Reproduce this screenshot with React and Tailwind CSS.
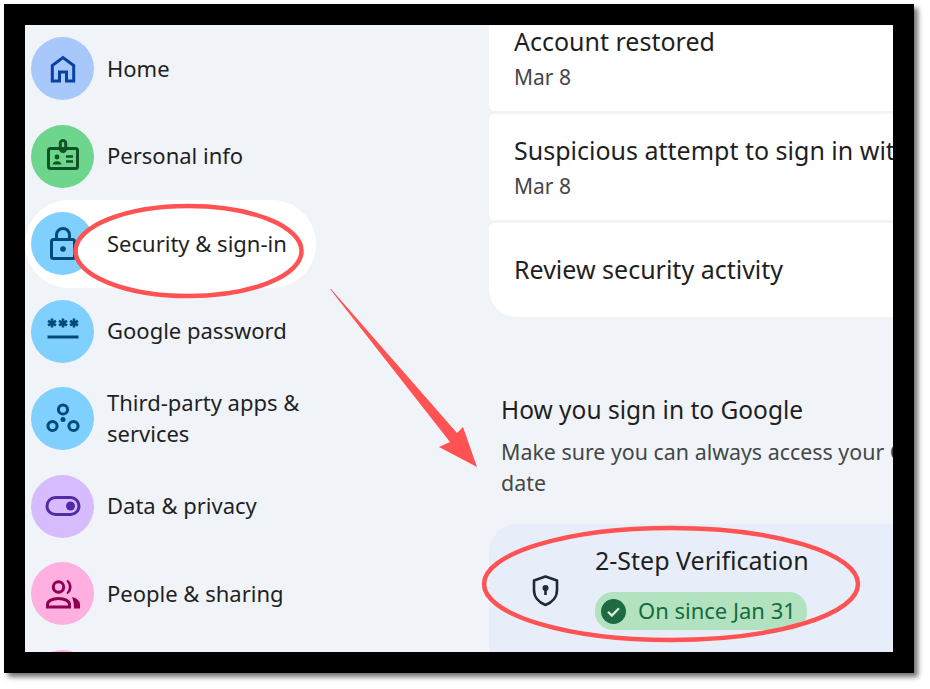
import React from "react";

const I = ({ children, color }) => (
  <svg width="36" height="36" viewBox="0 0 36 36" fill="none" stroke={color} strokeWidth="3">
    {children}
  </svg>
);

const Home = () => (
  <I color="#0842a0">
    <path d="M7.300 30V14.500L18 6.500l10.700 8V30h-7.200v-9h-7v9Z" strokeLinejoin="miter" />
  </I>
);
const Badge = () => (
  <I color="#0f5223">
    <rect x="3.500" y="10.500" width="29" height="20" rx="2" />
    <rect x="15.300" y="2.500" width="5.400" height="11" rx="2.700" />
    <circle cx="12" cy="19" r="2.400" fill="#0f5223" stroke="none" />
    <path d="M7.500 26.500c.5-4.500 8.500-4.500 9 0Z" fill="#0f5223" stroke="none" />
    <path d="M21 18.500h7M21 23.500h7" strokeWidth="2.400" />
  </I>
);
const Lock = () => (
  <I color="#004a77">
    <rect x="6.500" y="13.500" width="23" height="19" rx="2" />
    <path d="M11.500 13.500V9a6.500 6.500 0 0 1 13 0v4.500" />
    <circle cx="18" cy="23" r="2.800" fill="#004a77" stroke="none" />
  </I>
);
const Star = ({ x }) => (
  <g strokeWidth="2.600">
    <path d={`M${x} 5.500v9M${x - 4} 7.800l8 4.500M${x + 4} 7.800l-8 4.500`} />
  </g>
);
const Pass = () => (
  <I color="#004a77">
    <Star x={7} />
    <Star x={18} />
    <Star x={29} />
    <path d="M2.500 24h31" strokeWidth="3" />
  </I>
);
const Apps = () => (
  <I color="#004a77">
    <circle cx="18" cy="8.500" r="4.600" />
    <circle cx="7.500" cy="25" r="4.600" />
    <circle cx="28.500" cy="25" r="4.600" />
    <circle cx="18" cy="18.500" r="2.500" fill="#004a77" stroke="none" />
  </I>
);
const Toggle = () => (
  <I color="#5629a4">
    <rect x="2" y="9.500" width="32" height="17" rx="8.500" />
    <circle cx="25.500" cy="18" r="4.500" fill="#5629a4" stroke="none" />
  </I>
);
const People = () => (
  <I color="#8c0053">
    <circle cx="13.500" cy="11" r="5.200" />
    <path d="M2.500 31v-2.500c0-3.500 5-6 11-6s11 2.500 11 6V31Z" />
    <path d="M22 4.500a7.500 7.500 0 0 1 0 13c1.800-2 2.600-4 2.600-6.500S23.800 6.500 22 4.500Z" fill="#8c0053" strokeWidth="1.500" />
    <path d="M27 21c4.500 1 8 3.500 8 7.500V32.500h-6c0-4.500-.5-8-2-11.500Z" fill="#8c0053" stroke="none" />
  </I>
);

const items = [
  ["Home", "bg-[#a8c7fa]", <Home />],
  ["Personal info", "bg-[#6dd58c]", <Badge />],
  ["Security & sign-in", "bg-[#7fcfff]", <Lock />, true],
  ["Google password", "bg-[#7fcfff]", <Pass />],
  [<>Third-party apps &<br />services</>, "bg-[#7fcfff]", <Apps />],
  ["Data & privacy", "bg-[#d7bbff]", <Toggle />],
  ["People & sharing", "bg-[#ffafe0]", <People />],
  ["", "bg-[#ffafe0]", null],
];

const title = "text-[#1f1f1f] text-[25px] leading-[26px] whitespace-nowrap";
const sub = "text-[#444746] text-[21px] leading-[26px] whitespace-nowrap";

export default function App() {
  return (
    <div className="w-[930px] h-[689px] bg-white p-1 font-['Noto_Sans',sans-serif]">
      <div className="relative w-[910px] h-[669px] border-[21px] border-black shadow-[4px_4px_5px_rgba(0,0,0,0.55)]">
        <div className="flex w-full h-full bg-[#f0f4f9] overflow-hidden">
          <nav className="w-[464px] shrink-0 flex flex-col">
            {items.map(([label, bg, icon, active], i) => (
              <div
                key={i}
                className={`flex items-center gap-[13px] pl-[6px] h-[87.500px] shrink-0 w-[291px] rounded-r-full ${active ? "bg-white rounded-l-full" : ""}`}
              >
                <div className={`w-[63px] h-[63px] rounded-full flex items-center justify-center shrink-0 ${bg}`}>
                  {icon}
                </div>
                <div className="relative z-20 pb-[1px] text-[#1f1f1f] text-[22px] leading-[31px] whitespace-nowrap">
                  {label}
                </div>
              </div>
            ))}
          </nav>

          <main className="flex-1 min-w-0 flex flex-col overflow-hidden">
            <div className="bg-white h-[86px] w-[600px] shrink-0 rounded-b-[5px] pl-[25px] pt-[3px]">
              <div className={title}>Account restored</div>
              <div className={`${sub} mt-[10px]`}>Mar 8</div>
            </div>
            <div className="bg-white h-[106px] w-[600px] shrink-0 mt-[3px] rounded-[5px] pl-[25px] pt-[23px]">
              <div className={title}>Suspicious attempt to sign in with</div>
              <div className={`${sub} mt-[10px]`}>Mar 8</div>
            </div>
            <div className="bg-white h-[94px] w-[600px] shrink-0 mt-[3px] rounded-t-[5px] rounded-b-[28px] pl-[25px] pb-[2px] flex items-center">
              <div className={title}>Review security activity</div>
            </div>

            <div className="pl-[12px] mt-[78px] shrink-0">
              <div className="text-[#1f1f1f] text-[24.500px] leading-[30px] whitespace-nowrap">How you sign in to Google</div>
              <div className="text-[#444746] text-[21.400px] leading-[31px] mt-[11px] whitespace-nowrap">
                Make sure you can always access your Google Account by keeping this information up to
                <br />
                date
              </div>
            </div>

            <div className="mt-[26px] flex-1 w-[600px] bg-[#e8eef9] rounded-tl-[28px] flex items-start pt-[23px] pl-[40px]">
              <div className="flex items-center gap-[33px]">
                <svg className="mt-[3px]" width="33" height="33" viewBox="0 0 33 33" fill="none" stroke="#1f2937" strokeWidth="2.600">
                  <path d="M16.500 2.500 28 6.500v9.500c0 7-4.800 12.500-11.500 15C9.800 28.500 5 23 5 16V6.500Z" strokeLinejoin="round" />
                  <circle cx="16.500" cy="14" r="3" fill="#1f2937" stroke="none" />
                  <path d="M16.500 15v6" strokeWidth="2.600" />
                </svg>
                <div>
                  <div className="text-[#1f1f1f] text-[25px] leading-[26px] whitespace-nowrap">2-Step Verification</div>
                  <div className="mt-[19px] w-[212px] h-[38px] rounded-[18px] bg-[#b3e2c0] flex items-center gap-[12px] pl-[6px]">
                    <svg width="25" height="25" viewBox="0 0 25 25">
                      <circle cx="12.500" cy="12.500" r="12.500" fill="#1e6b42" />
                      <path d="M7 12.800l3.800 3.800 7.200-7.400" fill="none" stroke="#d8efdf" strokeWidth="2.200" />
                    </svg>
                    <span className="text-[#146c3e] text-[22px] leading-[26px] pb-[2px] whitespace-nowrap">On since Jan 31</span>
                  </div>
                </div>
              </div>
            </div>
          </main>
        </div>

        {/* Red annotations laid over the screenshot; coordinates offset by the frame's border */}
        <svg className="absolute z-10 -left-[21px] -top-[21px] pointer-events-none" width="910" height="669" viewBox="4 4 910 669" fill="none">
          <ellipse cx="188.500" cy="251" rx="113" ry="45" fill="white" stroke="#ff5252" strokeWidth="4.500" />
          <ellipse cx="671" cy="584" rx="187" ry="56" stroke="#ff5252" strokeWidth="4.500" />
          <polygon points="330,289 331,289 457,433 463,427 477,467 439,447 450,442" fill="#ff5252" />
        </svg>
      </div>
    </div>
  );
}
